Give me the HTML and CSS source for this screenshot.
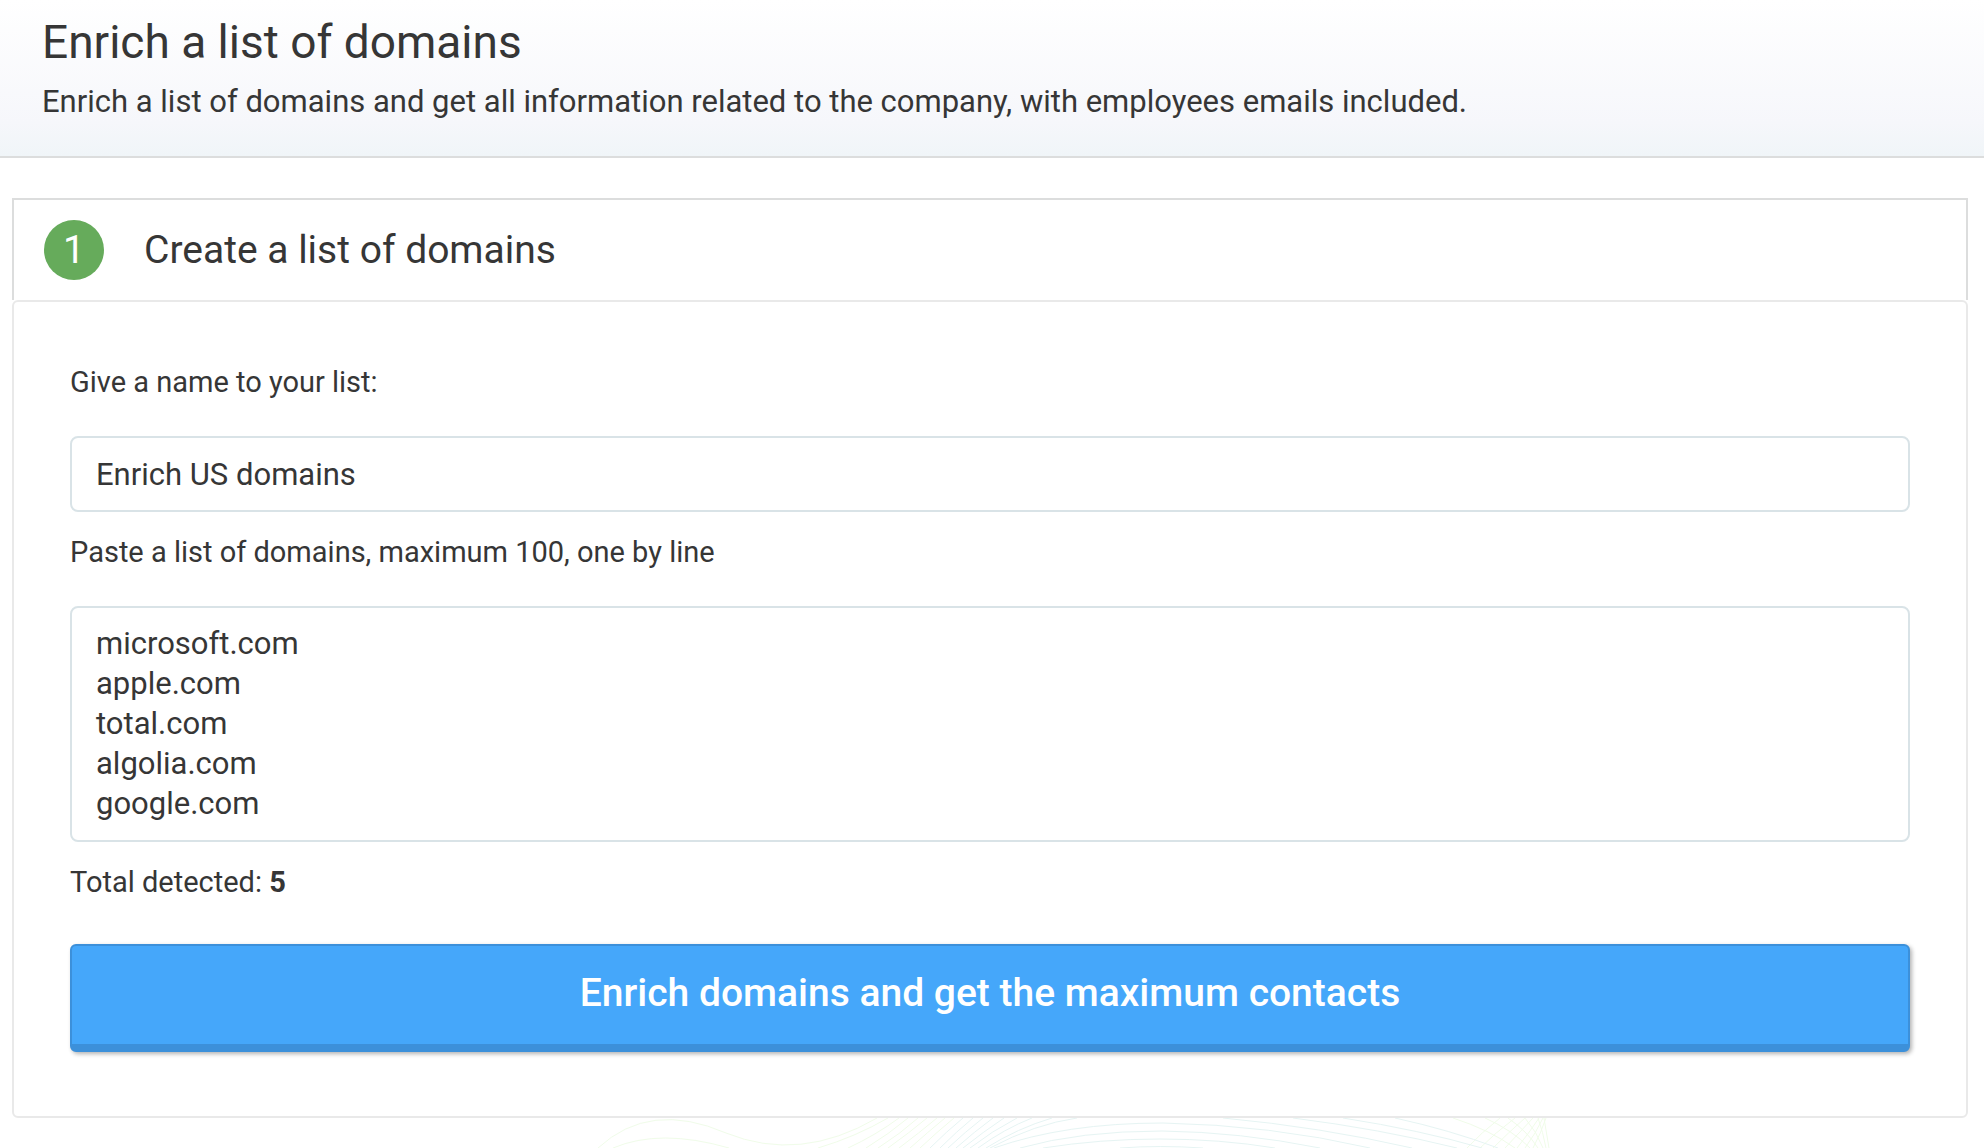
FILE: index.html
```html
<!DOCTYPE html>
<html lang="en">
<head>
    <meta charset="UTF-8">
    <meta name="viewport" content="width=device-width, initial-scale=1.0">
    <title>Enrich a list of domains</title>
    <link rel="stylesheet" href="styles.css">
</head>
<body>
    <header class="page-header">
        <h1>Enrich a list of domains</h1>
        <p>Enrich a list of domains and get all information related to the company, with employees emails included.</p>
    </header>

    <main class="container">
        <div class="step-header">
            <span class="step-number">1</span>
            <h2>Create a list of domains</h2>
        </div>
        <form class="step-body">
            <label for="listName">Give a name to your list:</label>
            <input type="text" id="listName" class="field" value="Enrich US domains">

            <label for="domains">Paste a list of domains, maximum 100, one by line</label>
            <textarea id="domains" class="field" rows="5">microsoft.com
apple.com
total.com
algolia.com
google.com</textarea>

            <p class="total">Total detected: <strong id="total">5</strong></p>
            <button type="button" class="btn btn-enrich">Enrich domains and get the maximum contacts</button>
        </form>
    </main>

    <svg class="waves" viewBox="0 0 1984 30" aria-hidden="true">
        <g class="wave-green">
            <path d="M598 30Q650-18 726 15Q800 45 877 0"/>
            <path d="M613 30Q660 10 729 30"/>
            <path d="M818 30Q855 19 888 0"/>
            <path d="M848 30Q876 17 899 0"/>
            <path d="M866 30Q889 16 908 0"/>
            <path d="M878 30Q900 16 918 0"/>
            <path d="M888 30Q909 15 927 0"/>
            <path d="M899 30Q919 15 937 0"/>
            <path d="M910 30Q928 14 945 0"/>
            <path d="M920 30Q937 14 954 0"/>
            <path d="M1467 30Q1481 15 1500 0"/>
            <path d="M1480 30Q1495 15 1515 0"/>
            <path d="M1493 30Q1508 15 1525 0"/>
            <path d="M1505 30Q1519 15 1533 0"/>
            <path d="M1517 30Q1529 15 1539 0"/>
            <path d="M1525 30Q1536 15 1543 0"/>
            <path d="M1533 30Q1541 15 1546 0"/>
            <path d="M1453 0Q1490 12 1515 30"/>
            <path d="M1485 0Q1512 12 1530 30"/>
            <path d="M1508 0Q1527 13 1538 30"/>
            <path d="M1525 0Q1537 14 1543 30"/>
            <path d="M1538 0Q1543 14 1546 30"/>
            <path d="M1544 0L1549 30"/>
        </g>
        <g class="wave-blue">
            <path d="M930 30Q946 14 963 0"/>
            <path d="M940 30Q956 14 973 0"/>
            <path d="M948 30Q965 14 983 0"/>
            <path d="M956 30Q974 14 993 0"/>
            <path d="M963 30Q983 14 1004 0"/>
            <path d="M970 30Q992 13 1017 0"/>
            <path d="M978 30Q1004 11 1032 0"/>
            <path d="M986 30Q1018 10 1052 0"/>
            <path d="M990 30Q1035 6 1077 0"/>
            <path d="M994 30Q1065 5 1163 5Q1270 7 1370 30"/>
            <path d="M1020 30Q1080 13 1162 13Q1240 14 1320 30"/>
            <path d="M1043 30Q1100 21 1160 21Q1220 21 1275 30"/>
            <path d="M1120 30Q1160 27 1203 30"/>
            <path d="M1223 0Q1320 9 1412 30"/>
            <path d="M1293 0Q1380 11 1457 30"/>
            <path d="M1343 0Q1420 12 1482 30"/>
            <path d="M1395 0Q1450 12 1498 30"/>
        </g>
    </svg>
</body>
</html>
```

FILE: styles.css
```css
* {
    box-sizing: border-box;
}
body {
    font-family: Roboto, "Liberation Sans", sans-serif;
    margin: 0;
    background-color: #fff;
    color: #363636;
}
h1, h2, p {
    margin: 0;
    font-weight: normal;
}
.page-header {
    padding: 14px 42px 34px;
    border-bottom: 2px solid #dcdddd;
    background: linear-gradient(to bottom, #fff 0%, #f6f7fb 78%, #f0f5f8 100%);
}
.page-header h1 {
    margin-bottom: 12px;
    font-size: 46px;
    line-height: 56px;
}
.page-header p {
    font-size: 31px;
    line-height: 40px;
}
.container {
    margin: 40px 16px 0 12px;
}
.step-header {
    display: flex;
    align-items: center;
    gap: 40px;
    padding: 20px 30px;
    border: 2px solid #dcdddd;
    border-bottom: none;
}
.step-header h2 {
    font-size: 39px;
    line-height: 56px;
}
.step-number {
    width: 60px;
    height: 60px;
    border-radius: 50%;
    background-color: #66ab5b;
    color: #fff;
    font-size: 39px;
    line-height: 60px;
    text-align: center;
}
.step-body {
    display: flex;
    flex-direction: column;
    padding: 60px 56px 64px;
    border: 2px solid #e9e9e9;
    border-radius: 6px;
}
.step-body label, .total {
    font-size: 29px;
    line-height: 40px;
}
.field {
    display: block;
    width: 100%;
    margin: 34px 0 20px;
    padding: 16px 24px;
    border: 2px solid #d9e3e7;
    border-radius: 8px;
    background-color: #fff;
    color: #363636;
    font-family: inherit;
    font-size: 31px;
    line-height: 40px;
}
input.field {
    height: 76px;
}
textarea.field {
    resize: none;
    overflow: hidden;
}
.btn {
    display: block;
    width: 100%;
    border: none;
    border-radius: 6px;
    color: #fff;
    font-family: inherit;
    cursor: pointer;
}
.btn-enrich {
    margin-top: 42px;
    padding: 22px 20px 26px;
    border: 2px solid #3c90da;
    border-bottom-width: 8px;
    background-color: #45a7fa;
    box-shadow: 2px 2px 4px rgba(0, 0, 0, 0.3);
    font-size: 39px;
    font-weight: 500;
    line-height: 50px;
}
.waves {
    display: block;
    width: 100%;
    fill: none;
    stroke-width: 1;
}
.wave-green {
    stroke: #f0fce9;
}
.wave-blue {
    stroke: #e6f4f3;
}
```
